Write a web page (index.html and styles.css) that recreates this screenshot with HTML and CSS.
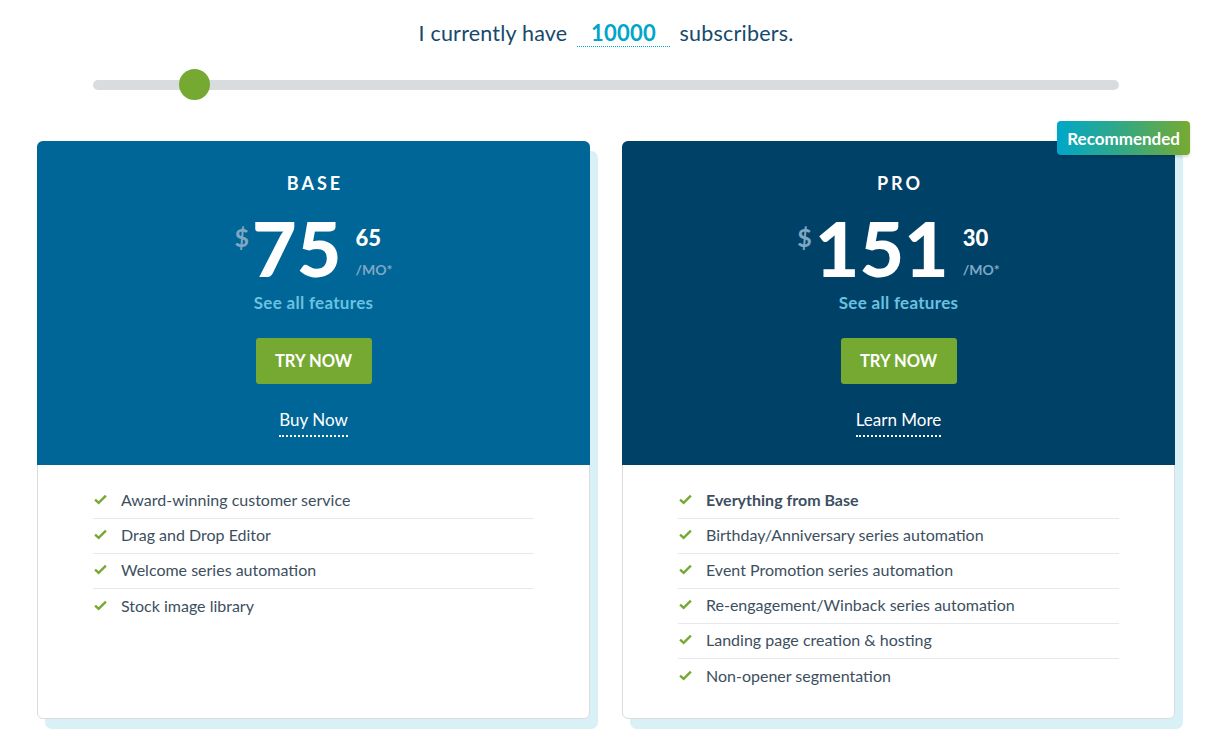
FILE: index.html
```html
<!DOCTYPE html>
<html lang="en">
<head>
<meta charset="utf-8">
<title>Pricing</title>
<link rel="stylesheet" href="styles.css">
</head>
<body>
<main class="page">
  <section class="calc">
    <p class="calc-text">I currently have <span class="calc-num">10000</span> subscribers.</p>
    <div class="slider"><span class="slider-thumb"></span></div>
  </section>

  <section class="plans">
    <article class="card">
      <header class="card-head card-head--base">
        <h2 class="plan-name">BASE</h2>
        <div class="price">
          <span class="price-cur">$</span>
          <span class="price-main">75</span>
          <span class="price-side"><span class="price-cents">65</span><span class="price-per">/MO*</span></span>
        </div>
        <a class="features-link">See all features</a>
        <a class="btn">TRY NOW</a>
        <a class="sub-link">Buy Now</a>
      </header>
      <ul class="features">
        <li class="feature"><svg class="check" viewBox="0 0 14 11"><path d="M1.2 5.6 L5 9.2 L12.8 1.4" fill="none" stroke="#76a932" stroke-width="2.6"/></svg>Award-winning customer service</li>
        <li class="feature"><svg class="check" viewBox="0 0 14 11"><path d="M1.2 5.6 L5 9.2 L12.8 1.4" fill="none" stroke="#76a932" stroke-width="2.6"/></svg>Drag and Drop Editor</li>
        <li class="feature"><svg class="check" viewBox="0 0 14 11"><path d="M1.2 5.6 L5 9.2 L12.8 1.4" fill="none" stroke="#76a932" stroke-width="2.6"/></svg>Welcome series automation</li>
        <li class="feature"><svg class="check" viewBox="0 0 14 11"><path d="M1.2 5.6 L5 9.2 L12.8 1.4" fill="none" stroke="#76a932" stroke-width="2.6"/></svg>Stock image library</li>
      </ul>
    </article>

    <article class="card">
      <span class="badge">Recommended</span>
      <header class="card-head card-head--pro">
        <h2 class="plan-name">PRO</h2>
        <div class="price">
          <span class="price-cur">$</span>
          <span class="price-main">151</span>
          <span class="price-side"><span class="price-cents">30</span><span class="price-per">/MO*</span></span>
        </div>
        <a class="features-link">See all features</a>
        <a class="btn">TRY NOW</a>
        <a class="sub-link">Learn More</a>
      </header>
      <ul class="features">
        <li class="feature feature--strong"><svg class="check" viewBox="0 0 14 11"><path d="M1.2 5.6 L5 9.2 L12.8 1.4" fill="none" stroke="#76a932" stroke-width="2.6"/></svg>Everything from Base</li>
        <li class="feature"><svg class="check" viewBox="0 0 14 11"><path d="M1.2 5.6 L5 9.2 L12.8 1.4" fill="none" stroke="#76a932" stroke-width="2.6"/></svg>Birthday/Anniversary series automation</li>
        <li class="feature"><svg class="check" viewBox="0 0 14 11"><path d="M1.2 5.6 L5 9.2 L12.8 1.4" fill="none" stroke="#76a932" stroke-width="2.6"/></svg>Event Promotion series automation</li>
        <li class="feature"><svg class="check" viewBox="0 0 14 11"><path d="M1.2 5.6 L5 9.2 L12.8 1.4" fill="none" stroke="#76a932" stroke-width="2.6"/></svg>Re-engagement/Winback series automation</li>
        <li class="feature"><svg class="check" viewBox="0 0 14 11"><path d="M1.2 5.6 L5 9.2 L12.8 1.4" fill="none" stroke="#76a932" stroke-width="2.6"/></svg>Landing page creation &amp; hosting</li>
        <li class="feature"><svg class="check" viewBox="0 0 14 11"><path d="M1.2 5.6 L5 9.2 L12.8 1.4" fill="none" stroke="#76a932" stroke-width="2.6"/></svg>Non-opener segmentation</li>
      </ul>
    </article>
  </section>
</main>
</body>
</html>
```

FILE: styles.css
```css
* { box-sizing: border-box; }
html, body { margin: 0; padding: 0; }
html { background: #fff; }
body {
  font-family: Lato, "Open Sans", Arial, sans-serif;
  color: #3d4f5f;
  width: 1210px;
  height: 754px;
  overflow: hidden;
}
.page { padding: 18px 35px 0 37px; }

.calc { display: flex; flex-direction: column; align-items: center; }
.calc-text {
  margin: 0;
  font-size: 21.5px;
  line-height: 30px;
  color: #17496c;
  letter-spacing: 0.2px;
}
.calc-num {
  display: inline-block;
  margin: 0 4px;
  padding: 0 14px;
  font-weight: 700;
  font-size: 22px;
  color: #00a6c8;
  border-bottom: 1px dotted #00a6c8;
  line-height: 26px;
}
.slider {
  position: relative;
  margin-top: 32px;
  width: 1026px;
  height: 10px;
  border-radius: 5px;
  background: #d8dcdf;
}
.slider-thumb {
  position: absolute;
  left: 86px;
  top: -11px;
  width: 31px;
  height: 31px;
  border-radius: 50%;
  background: #76a932;
}

.plans {
  display: flex;
  gap: 32px;
  margin-top: 51px;
}
.card {
  position: relative;
  width: 553px;
  height: 578px;
  background: #fff;
  border: 1px solid #dcdcdc;
  border-radius: 6px;
}
.card::before {
  content: "";
  position: absolute;
  left: 7px;
  top: 9px;
  right: -9px;
  bottom: -11px;
  background: #d9f0f6;
  border-radius: 7px;
  z-index: -1;
}
.card-head {
  margin: -1px -1px 0 -1px;
  height: 324px;
  border-radius: 6px 6px 0 0;
  display: flex;
  flex-direction: column;
  align-items: center;
  color: #fff;
  padding-top: 32px;
}
.card-head--base { background: #006597; }
.card-head--pro { background: #004168; }

.plan-name {
  margin: 0;
  font-size: 18px;
  line-height: 20px;
  font-weight: 700;
  letter-spacing: 3px;
  padding-left: 3px;
}
.price {
  display: flex;
  align-items: flex-start;
  margin-top: 20px;
  height: 68px;
}
.price-cur {
  font-size: 25px;
  font-weight: 700;
  line-height: 24px;
  color: #7fa7c3;
  margin-top: 12px;
  margin-right: 3px;
}
.price-main {
  font-size: 77px;
  font-weight: 900;
  line-height: 68px;
  letter-spacing: 0;
}
.price-side {
  display: flex;
  flex-direction: column;
  margin-left: 14px;
}
.price-cents {
  font-size: 22px;
  font-weight: 900;
  line-height: 22px;
  margin-top: 14px;
}
.price-per {
  font-size: 14px;
  font-weight: 700;
  line-height: 16px;
  color: #7fa7c3;
  margin-top: 13px;
}
.features-link {
  margin-top: 12px;
  font-size: 17px;
  line-height: 20px;
  font-weight: 700;
  letter-spacing: 0.3px;
  color: #68c2e0;
}
.btn {
  margin-top: 25px;
  width: 116px;
  height: 46px;
  border-radius: 3px;
  background: #76a932;
  display: flex;
  align-items: center;
  justify-content: center;
  font-size: 16.5px;
  font-weight: 700;
  color: #fff;
}
.sub-link {
  margin-top: 26px;
  font-size: 17px;
  line-height: 20px;
  padding-bottom: 5px;
  color: #fff;
  border-bottom: 2px dotted #fff;
}

.features {
  list-style: none;
  margin: 0;
  padding: 19px 55px 0 55px;
}
.feature {
  display: flex;
  align-items: center;
  height: 35px;
  padding-bottom: 3px;
  font-size: 16px;
  color: #3d4f5f;
  border-bottom: 1px solid #e6e8ea;
}
.feature:last-child { border-bottom: none; }
.feature--strong { font-weight: 700; }
.check {
  width: 13px;
  height: 11px;
  margin: 0 14px 0 1px;
  flex: none;
}

.badge {
  position: absolute;
  top: -21px;
  right: -16px;
  z-index: 2;
  height: 34px;
  padding: 0 10px;
  display: flex;
  align-items: center;
  border-radius: 4px;
  background: linear-gradient(90deg, #00a7c9 0%, #3aa87a 55%, #77aa31 100%);
  color: #fff;
  font-size: 17px;
  font-weight: 700;
  box-shadow: 0 2px 3px rgba(0,0,0,0.15);
}
```
